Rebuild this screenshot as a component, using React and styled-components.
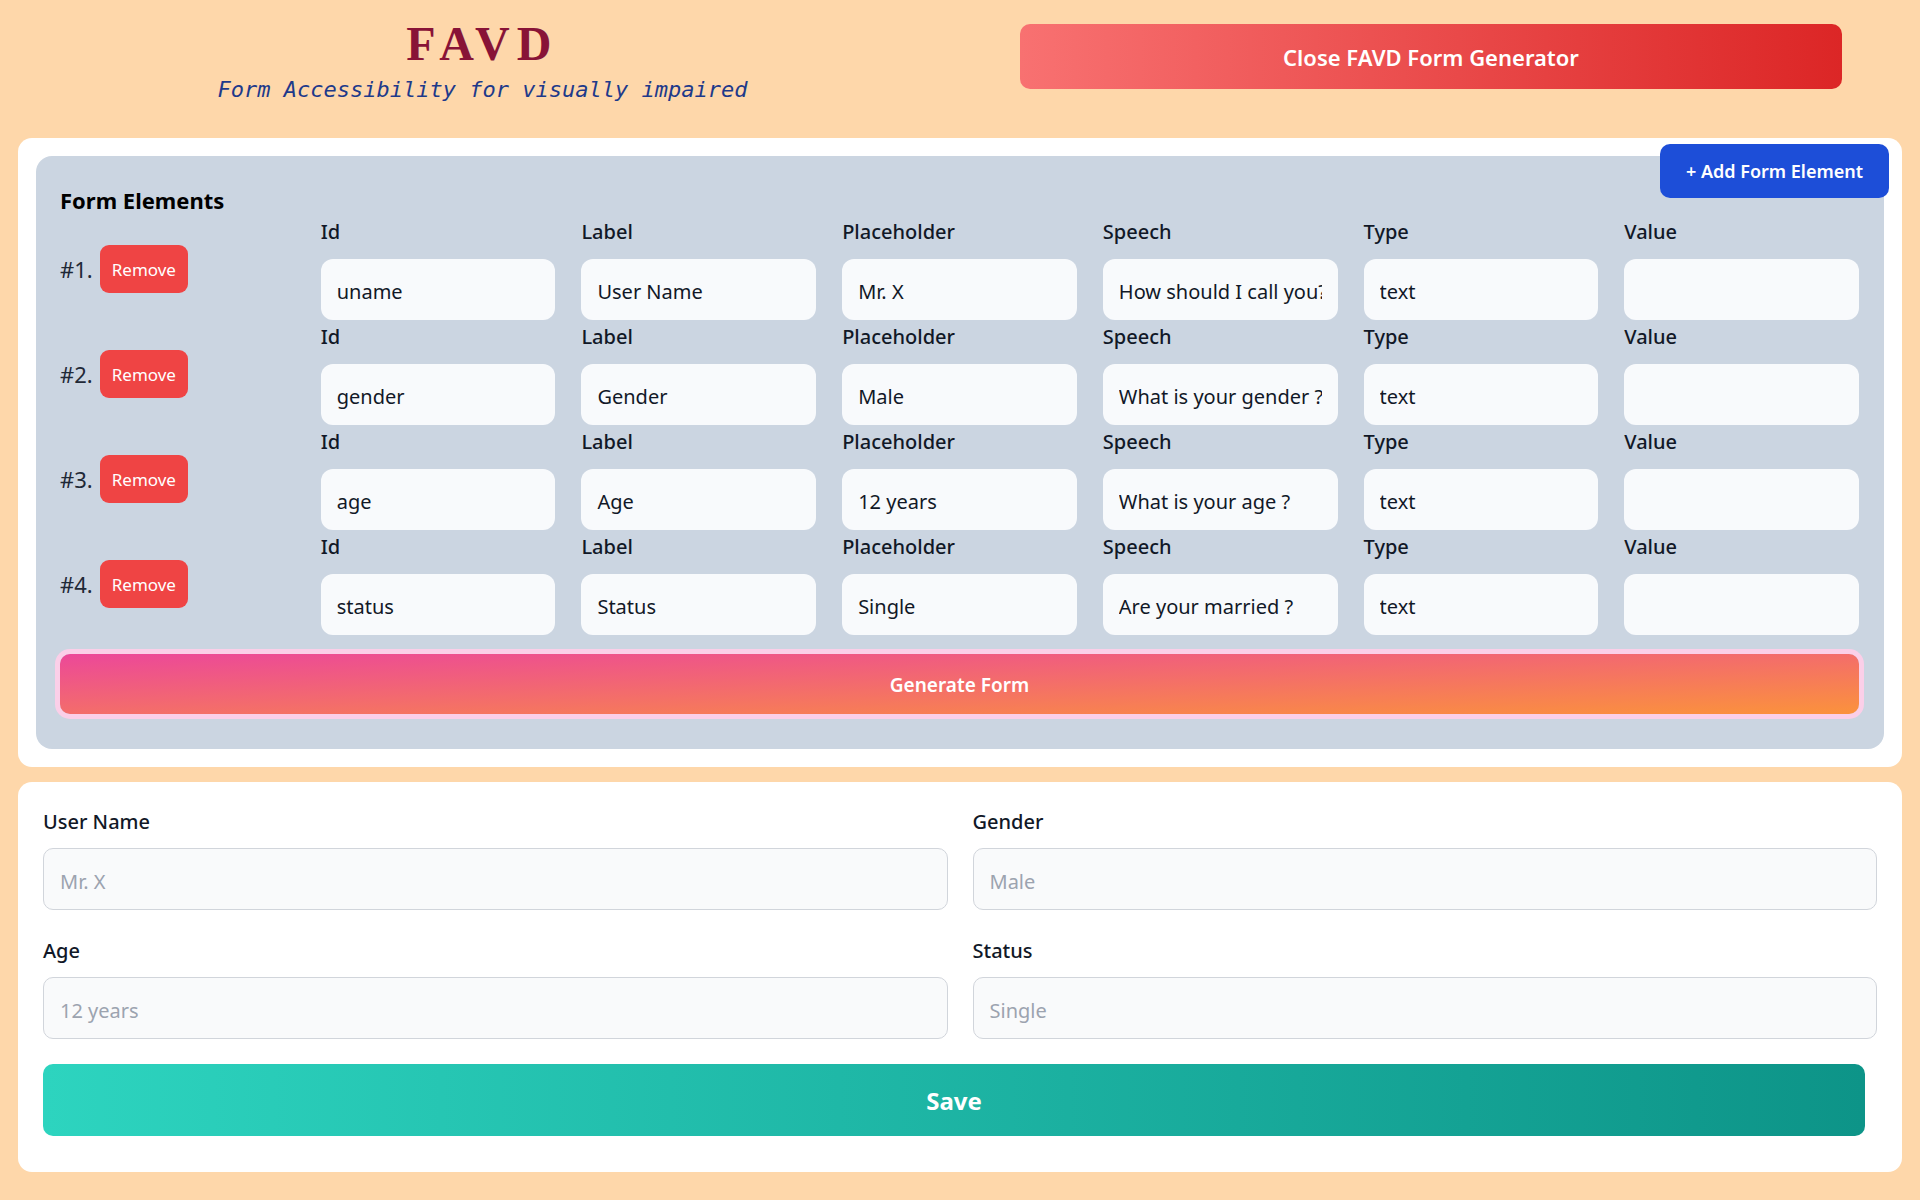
import React from 'react';
import styled, { createGlobalStyle } from 'styled-components';

const GlobalStyle = createGlobalStyle`
  * {
    box-sizing: border-box;
  }

  body {
    margin: 0;
    background: #fed7aa;
    font-family: "Noto Sans", "Open Sans", sans-serif;
    color: #111827;
  }
`;

const Page = styled.div`
  min-height: 1200px;
  padding-bottom: 27px;
`;

const Header = styled.header`
  display: grid;
  grid-template-columns: 1fr 1fr;
  padding: 20px 0 34px;
`;

const Brand = styled.div`
  display: flex;
  flex-direction: column;
  align-items: center;
  padding-left: 5px;
`;

const Title = styled.h1`
  margin: 0;
  font-family: "Liberation Serif", "Times New Roman", serif;
  font-size: 48px;
  line-height: 48px;
  font-weight: 700;
  letter-spacing: 0.15em;
  color: #881337;
`;

const Tagline = styled.p`
  margin: 8px 0 0;
  font-family: "DejaVu Sans Mono", "Liberation Mono", monospace;
  font-style: italic;
  font-size: 22px;
  line-height: 28px;
  color: #1e3a8a;
`;

const CloseButton = styled.button`
  align-self: start;
  width: 822px;
  height: 65px;
  margin: 4px 0 0 60px;
  padding-top: 2px;
  border: none;
  border-radius: 10px;
  background: linear-gradient(to right, #f87171, #dc2626);
  color: #fff;
  font-family: inherit;
  font-size: 22px;
  font-weight: 600;
`;

const Main = styled.main`
  padding: 0 18px;
`;

const Card = styled.section`
  position: relative;
  background: #fff;
  border-radius: 14px;
  padding: ${p => p.$padding};
  margin-bottom: 15px;
`;

const AddButton = styled.button`
  position: absolute;
  top: 6px;
  right: 13px;
  width: 229px;
  height: 54px;
  border: none;
  border-radius: 10px;
  background: #1d4ed8;
  color: #fff;
  font-family: inherit;
  font-size: 18px;
  font-weight: 600;
`;

const Panel = styled.div`
  background: #cbd5e1;
  border-radius: 16px;
  padding: 28px 25px 35px 24px;
`;

const PanelTitle = styled.h2`
  margin: 0 0 2px;
  font-size: 22px;
  line-height: 32px;
  font-weight: 700;
  color: #000;
`;

const Rows = styled.div`
  display: flex;
  flex-direction: column;
  gap: 3px;
`;

const ElementRow = styled.div`
  display: grid;
  grid-template-columns: repeat(7, 1fr);
  column-gap: 26px;
`;

const RowIndex = styled.div`
  display: flex;
  align-items: center;
  gap: 7px;
`;

const IndexLabel = styled.span`
  font-size: 22px;
  color: #1f2937;
`;

const RemoveButton = styled.button`
  height: 48px;
  padding: 0 12px;
  border: none;
  border-radius: 9px;
  background: #ef4444;
  color: #fff;
  font-family: inherit;
  font-size: 17px;
`;

const Field = styled.label`
  display: flex;
  flex-direction: column;
  min-width: 0;
`;

const FieldLabel = styled.span`
  display: block;
  font-size: 20px;
  line-height: 28px;
  font-weight: 500;
  color: #111827;
  margin-bottom: ${p => p.$gap}px;
`;

const FieldInput = styled.input`
  width: 100%;
  height: 61px;
  padding: 4px 16px 0;
  border: none;
  border-radius: 12px;
  background: #f8fafc;
  color: #111827;
  font-family: inherit;
  font-size: 20px;
  outline: none;
`;

const GenerateButton = styled.button`
  display: block;
  width: 100%;
  height: 60px;
  margin-top: 19px;
  padding-top: 3px;
  border: none;
  border-radius: 10px;
  background: linear-gradient(to bottom right, #ec4899, #fb923c);
  box-shadow: 0 0 0 5px #fbcfe8;
  color: #fff;
  font-family: inherit;
  font-size: 19px;
  font-weight: 600;
`;

const PreviewGrid = styled.div`
  display: grid;
  grid-template-columns: 1fr 1fr;
  column-gap: 25px;
  row-gap: 27px;
`;

const PreviewInput = styled.input`
  width: 100%;
  height: 62px;
  padding: 4px 16px 0;
  border: 1px solid #d1d5db;
  border-radius: 10px;
  background: #f9fafb;
  color: #111827;
  font-family: inherit;
  font-size: 20px;
  outline: none;

  &::placeholder {
    color: #9ca3af;
  }
`;

const SaveButton = styled.button`
  display: block;
  width: calc(100% - 12px);
  height: 72px;
  margin-top: 25px;
  padding-top: 2px;
  border: none;
  border-radius: 10px;
  background: linear-gradient(to right, #2dd4bf, #0d9488);
  color: #fff;
  font-family: inherit;
  font-size: 24px;
  font-weight: 700;
`;

const elements = [
  { id: 'uname', label: 'User Name', placeholder: 'Mr. X', speech: 'How should I call you?', type: 'text', value: '' },
  { id: 'gender', label: 'Gender', placeholder: 'Male', speech: 'What is your gender ?', type: 'text', value: '' },
  { id: 'age', label: 'Age', placeholder: '12 years', speech: 'What is your age ?', type: 'text', value: '' },
  { id: 'status', label: 'Status', placeholder: 'Single', speech: 'Are your married ?', type: 'text', value: '' },
];

const columns = [
  ['id', 'Id'],
  ['label', 'Label'],
  ['placeholder', 'Placeholder'],
  ['speech', 'Speech'],
  ['type', 'Type'],
  ['value', 'Value'],
];

const App = () => (
  <Page>
    <GlobalStyle />
    <Header>
      <Brand>
        <Title>FAVD</Title>
        <Tagline>Form Accessibility for visually impaired</Tagline>
      </Brand>
      <CloseButton>Close FAVD Form Generator</CloseButton>
    </Header>

    <Main>
      <Card $padding="18px">
        <AddButton>+ Add Form Element</AddButton>
        <Panel>
          <PanelTitle>Form Elements</PanelTitle>
          <Rows>
            {elements.map((el, i) => (
              <ElementRow key={el.id}>
                <RowIndex>
                  <IndexLabel>#{i + 1}.</IndexLabel>
                  <RemoveButton>Remove</RemoveButton>
                </RowIndex>
                {columns.map(([key, title]) => (
                  <Field key={key}>
                    <FieldLabel $gap={13}>{title}</FieldLabel>
                    <FieldInput defaultValue={el[key]} />
                  </Field>
                ))}
              </ElementRow>
            ))}
          </Rows>
          <GenerateButton>Generate Form</GenerateButton>
        </Panel>
      </Card>

      <Card $padding="26px 25px 36px">
        <PreviewGrid>
          {elements.map(el => (
            <Field key={el.id}>
              <FieldLabel $gap={12}>{el.label}</FieldLabel>
              <PreviewInput id={el.id} placeholder={el.placeholder} />
            </Field>
          ))}
        </PreviewGrid>
        <SaveButton>Save</SaveButton>
      </Card>
    </Main>
  </Page>
);

export default App;
